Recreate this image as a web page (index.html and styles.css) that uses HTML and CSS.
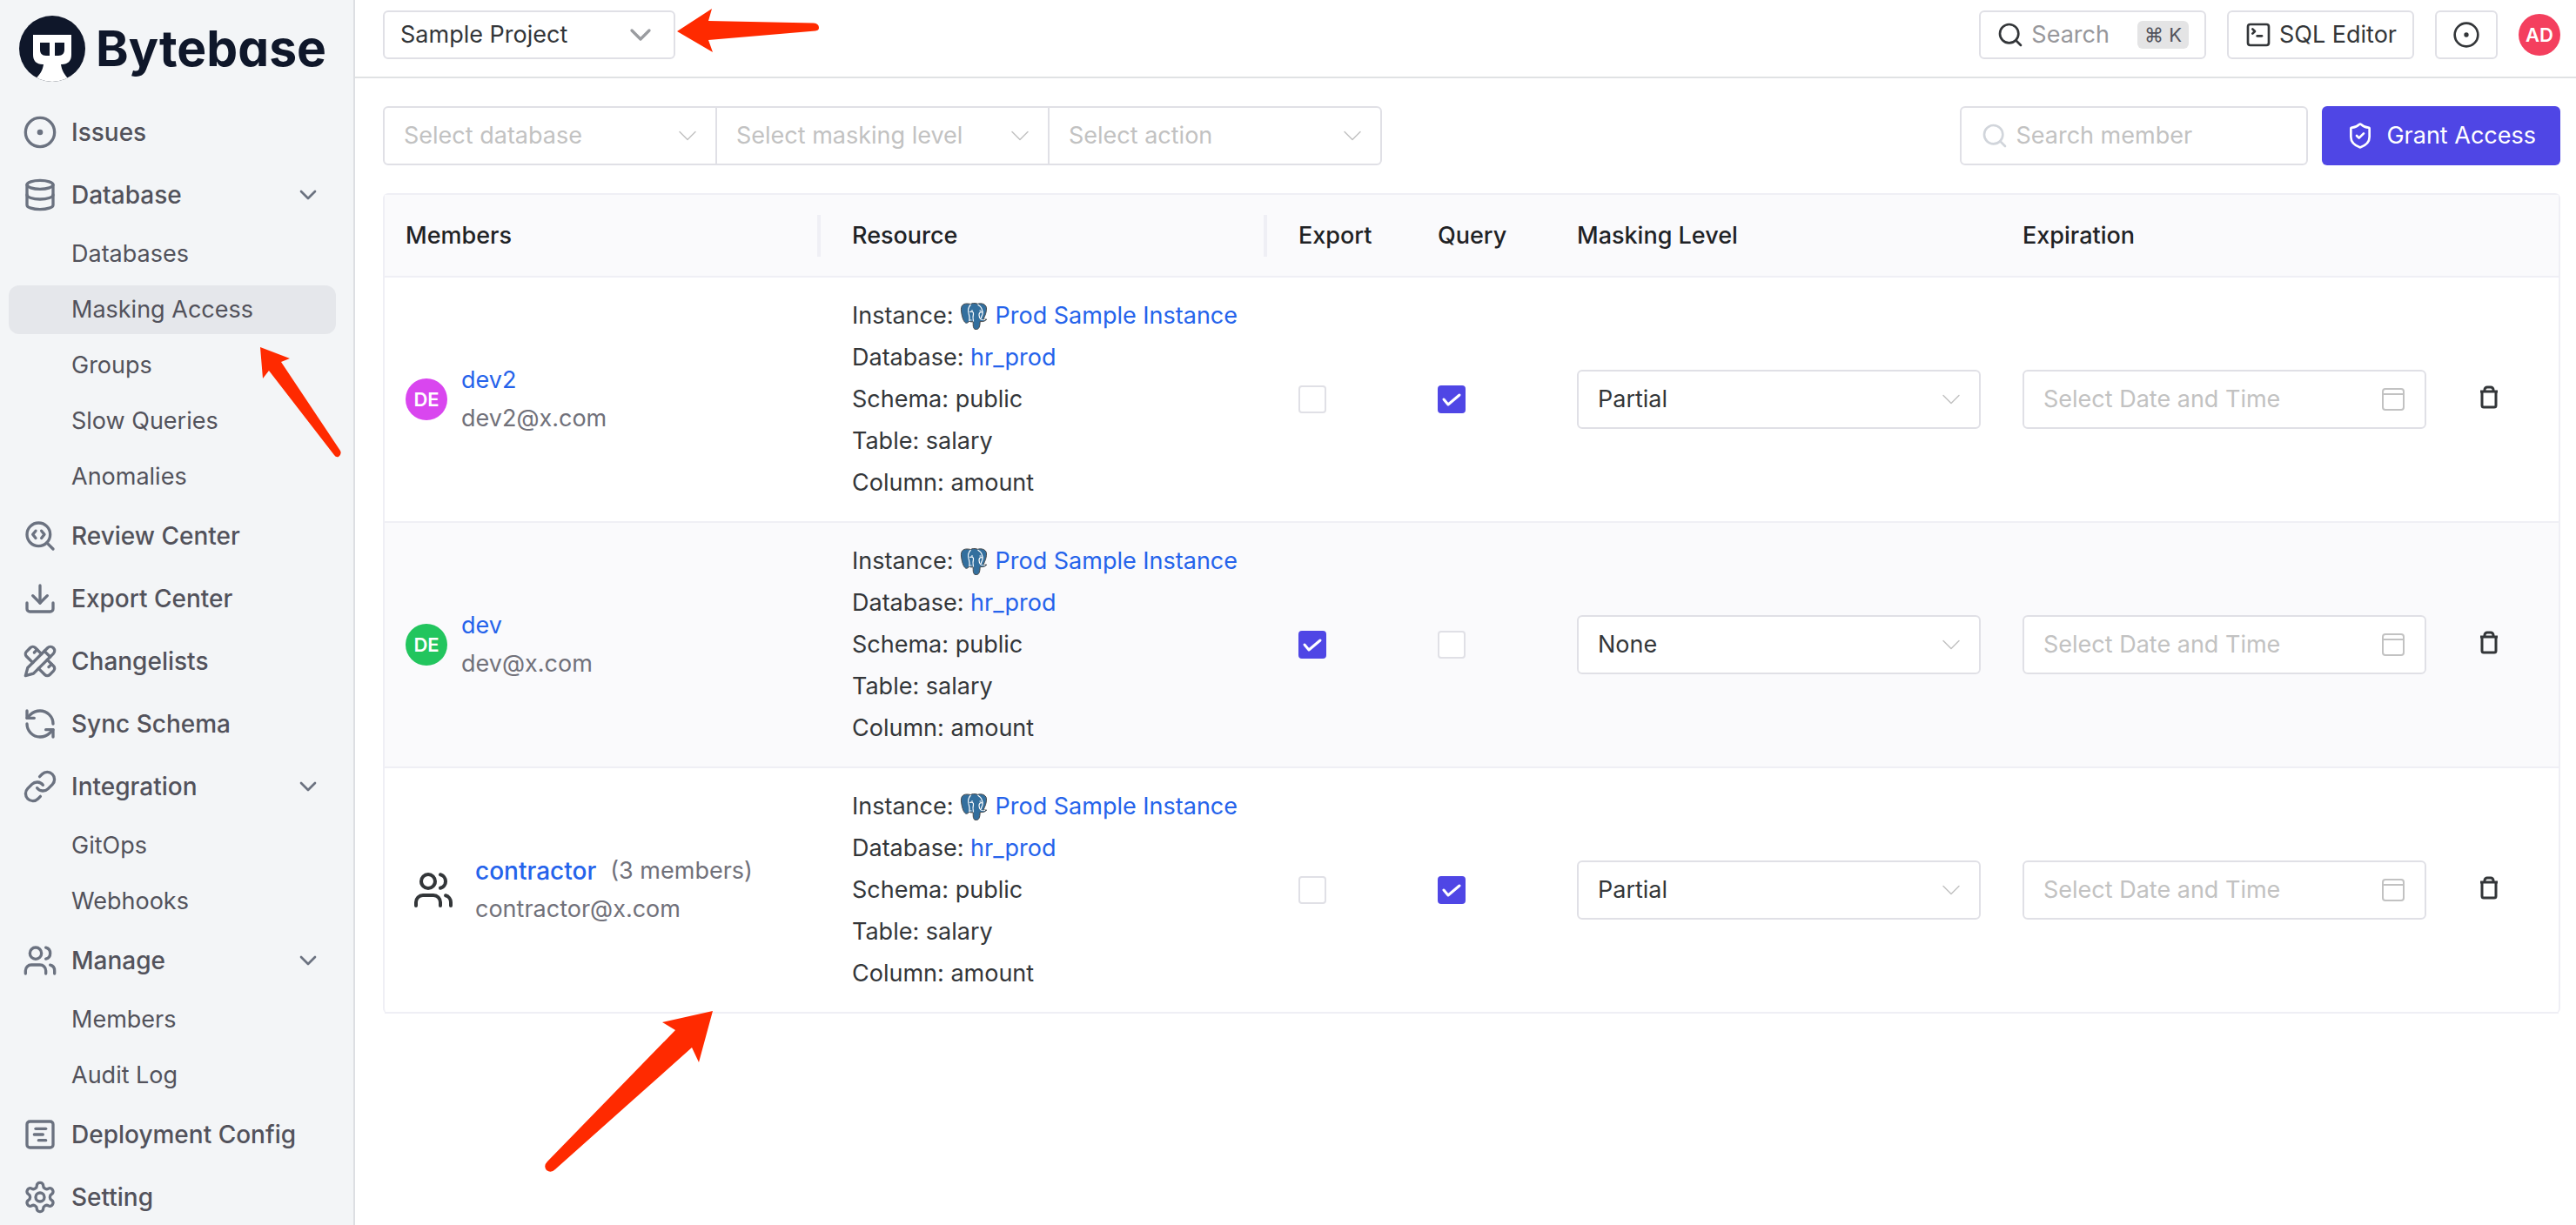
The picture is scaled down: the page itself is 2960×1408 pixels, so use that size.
FILE: index.html
```html
<!DOCTYPE html>
<html lang="en">
<head>
<meta charset="utf-8">
<title>Masking Access - Bytebase</title>
<link rel="stylesheet" href="styles.css">
</head>
<body>
<svg class="sprite" aria-hidden="true">
  <symbol id="i-dot" viewBox="0 0 24 24"><circle cx="12" cy="12" r="10"/><circle cx="12" cy="12" r="1"/></symbol>
  <symbol id="i-database" viewBox="0 0 24 24"><ellipse cx="12" cy="5" rx="9" ry="3"/><path d="M3 5v14a9 3 0 0 0 18 0V5"/><path d="M3 12a9 3 0 0 0 18 0"/></symbol>
  <symbol id="i-search-code" viewBox="0 0 24 24"><path d="m13 13.500 2-2.500-2-2.500"/><path d="m21 21-4.300-4.300"/><path d="M9 8.500 7 11l2 2.500"/><circle cx="11" cy="11" r="8"/></symbol>
  <symbol id="i-download" viewBox="0 0 24 24"><path d="M21 15v4a2 2 0 0 1-2 2H5a2 2 0 0 1-2-2v-4"/><path d="m7 10 5 5 5-5"/><path d="M12 15V3"/></symbol>
  <symbol id="i-pencil-ruler" viewBox="0 0 24 24"><path d="m15 5 4 4"/><path d="M13 7 8.700 2.700a2.410 2.410 0 0 0-3.400 0L2.700 5.300a2.410 2.410 0 0 0 0 3.400L7 13"/><path d="m8 6 2-2"/><path d="m2 22 5.500-1.500L21.170 6.830a2.820 2.820 0 0 0-4-4L3.500 16.500Z"/><path d="m18 16 2-2"/><path d="m17 11 4.300 4.300c.94.94.94 2.460 0 3.400l-2.600 2.600c-.94.94-2.460.94-3.400 0L11 17"/></symbol>
  <symbol id="i-refresh" viewBox="0 0 24 24"><path d="M21 12a9 9 0 0 0-9-9 9.750 9.750 0 0 0-6.740 2.740L3 8"/><path d="M3 3v5h5"/><path d="M3 12a9 9 0 0 0 9 9 9.750 9.750 0 0 0 6.740-2.740L21 16"/><path d="M16 16h5v5"/></symbol>
  <symbol id="i-link" viewBox="0 0 24 24"><path d="M10 13a5 5 0 0 0 7.540.54l3-3a5 5 0 0 0-7.070-7.070l-1.720 1.710"/><path d="M14 11a5 5 0 0 0-7.540-.54l-3 3a5 5 0 0 0 7.070 7.070l1.710-1.710"/></symbol>
  <symbol id="i-users" viewBox="0 0 24 24"><path d="M16 21v-2a4 4 0 0 0-4-4H6a4 4 0 0 0-4 4v2"/><circle cx="9" cy="7" r="4"/><path d="M22 21v-2a4 4 0 0 0-3-3.870"/><path d="M16 3.130a4 4 0 0 1 0 7.750"/></symbol>
  <symbol id="i-gantt" viewBox="0 0 24 24"><rect x="3" y="3" width="18" height="18" rx="2"/><path d="M9 8h7"/><path d="M8 12h6"/><path d="M11 16h5"/></symbol>
  <symbol id="i-settings" viewBox="0 0 24 24"><path d="M12.220 2h-.44a2 2 0 0 0-2 2v.18a2 2 0 0 1-1 1.730l-.43.25a2 2 0 0 1-2 0l-.15-.08a2 2 0 0 0-2.730.73l-.22.38a2 2 0 0 0 .73 2.730l.15.1a2 2 0 0 1 1 1.720v.51a2 2 0 0 1-1 1.740l-.15.09a2 2 0 0 0-.73 2.730l.22.38a2 2 0 0 0 2.730.73l.15-.08a2 2 0 0 1 2 0l.43.25a2 2 0 0 1 1 1.730V20a2 2 0 0 0 2 2h.44a2 2 0 0 0 2-2v-.18a2 2 0 0 1 1-1.730l.43-.25a2 2 0 0 1 2 0l.15.08a2 2 0 0 0 2.730-.73l.22-.39a2 2 0 0 0-.73-2.730l-.15-.08a2 2 0 0 1-1-1.740v-.5a2 2 0 0 1 1-1.740l.15-.09a2 2 0 0 0 .73-2.730l-.22-.38a2 2 0 0 0-2.730-.73l-.15.08a2 2 0 0 1-2 0l-.43-.25a2 2 0 0 1-1-1.730V4a2 2 0 0 0-2-2z"/><circle cx="12" cy="12" r="3"/></symbol>
  <symbol id="i-chevron" viewBox="0 0 24 24"><path d="m6 9 6 6 6-6"/></symbol>
  <symbol id="i-search" viewBox="0 0 24 24"><circle cx="11" cy="11" r="8"/><path d="m21 21-4.300-4.300"/></symbol>
  <symbol id="i-terminal" viewBox="0 0 24 24"><path d="m7 11 2-2-2-2"/><path d="M11 13h4"/><rect x="3" y="3" width="18" height="18" rx="2"/></symbol>
  <symbol id="i-shield" viewBox="0 0 24 24"><path d="M20 13c0 5-3.500 7.500-7.660 8.950a1 1 0 0 1-.67-.01C7.500 20.500 4 18 4 13V6a1 1 0 0 1 1-1c2 0 4.500-1.200 6.240-2.720a1.170 1.170 0 0 1 1.520 0C14.510 3.810 17 5 19 5a1 1 0 0 1 1 1z"/><path d="m9 12 2 2 4-4"/></symbol>
  <symbol id="i-calendar" viewBox="0 0 28 28"><rect x="2" y="2" width="24" height="24" rx="3"/><path d="M2 8h24"/></symbol>
  <symbol id="i-trash" viewBox="0 0 32 32"><path d="M6 7h20M8 7v16a2 2 0 0 0 2 2h12a2 2 0 0 0 2-2V7M11 6V5a3 3 0 0 1 3-3h4a3 3 0 0 1 3 3v1"/></symbol>
  <symbol id="i-postgres" viewBox="0 0 32 32">
    <path d="M8 2C3 2 1 5 1.500 10c.5 5 2 12 5 14 1.500 1 3-.5 4.500-2 1 1 2.500 1.200 4 .5.500 4-.5 8.500 3 9 4 .5 5-3 5.200-9 3 .5 6.500-.5 7.500-2.500-1 0-2.500.3-3.700-.3C29 16 31 10.500 30.500 6.500 29.500 2.500 25 1 20.500 2.300 17 1 14 1.500 12.500 2.500 11 2.200 9.500 2 8 2z" fill="#336f9e" stroke="#4a4a4a" stroke-width="1"/>
    <path d="M12.500 3C9.500 6 9 11 10.500 15c.8 2.500.5 4.500.3 6.500M20.500 3c4 2.500 6 7 5.500 11-.3 2-2 3-1.500 5M15.500 22.500c-.5-3-1-5 0-8.500.5-2.500-1.500-3.500-4.500-2.500M24 20c-1-1-2-2.500-2-5s1.500-4 3.500-3" fill="none" stroke="#fff" stroke-width="1.200"/>
    <path d="M13.500 21c-1.500-.3-2.500.2-3.500 1.200M24 20c1.500.8 3.500.9 5 .3" fill="none" stroke="#fff" stroke-width="1"/>
    <path d="M13 10h2M22.500 10h2" stroke="#fff" stroke-width="1"/>
  </symbol>
</svg>

<div class="app">
  <aside class="sidebar">
    <a class="brand" href="#">
      <svg class="brand-mark" viewBox="0 0 76 76" aria-hidden="true">
        <defs><clipPath id="brand-clip"><circle cx="38" cy="38" r="38"/></clipPath></defs>
        <circle cx="38" cy="38" r="38" fill="#0f172a"/>
        <path clip-path="url(#brand-clip)" fill="#fff" d="M16 22h44v23c0 7-4 11-11 11h-1c1 7 4 12 10 18v4H17v-4c7-6 10-11 11-18h-1c-7 0-11-4-11-11z"/>
        <path fill="#0f172a" d="M24 31h11v15h-4c-5 0-7-3-7-7zM41 31h11v8c0 4-2 7-7 7h-4z"/>
      </svg>
      <span class="brand-name">Bytebase</span>
    </a>
    <nav class="nav">
      <a class="nav-item" href="#"><svg class="icon nav-icon"><use href="#i-dot"/></svg>Issues</a>
      <a class="nav-item" href="#"><svg class="icon nav-icon"><use href="#i-database"/></svg>Database<svg class="icon nav-chevron"><use href="#i-chevron"/></svg></a>
      <a class="nav-sub" href="#">Databases</a>
      <a class="nav-sub is-active" href="#">Masking Access</a>
      <a class="nav-sub" href="#">Groups</a>
      <a class="nav-sub" href="#">Slow Queries</a>
      <a class="nav-sub" href="#">Anomalies</a>
      <a class="nav-item" href="#"><svg class="icon nav-icon"><use href="#i-search-code"/></svg>Review Center</a>
      <a class="nav-item" href="#"><svg class="icon nav-icon"><use href="#i-download"/></svg>Export Center</a>
      <a class="nav-item" href="#"><svg class="icon nav-icon"><use href="#i-pencil-ruler"/></svg>Changelists</a>
      <a class="nav-item" href="#"><svg class="icon nav-icon"><use href="#i-refresh"/></svg>Sync Schema</a>
      <a class="nav-item" href="#"><svg class="icon nav-icon"><use href="#i-link"/></svg>Integration<svg class="icon nav-chevron"><use href="#i-chevron"/></svg></a>
      <a class="nav-sub" href="#">GitOps</a>
      <a class="nav-sub" href="#">Webhooks</a>
      <a class="nav-item" href="#"><svg class="icon nav-icon"><use href="#i-users"/></svg>Manage<svg class="icon nav-chevron"><use href="#i-chevron"/></svg></a>
      <a class="nav-sub" href="#">Members</a>
      <a class="nav-sub" href="#">Audit Log</a>
      <a class="nav-item" href="#"><svg class="icon nav-icon"><use href="#i-gantt"/></svg>Deployment Config</a>
      <a class="nav-item" href="#"><svg class="icon nav-icon"><use href="#i-settings"/></svg>Setting</a>
    </nav>
  </aside>

  <div class="page">
    <header class="topbar">
      <button class="btn project" type="button">Sample Project<svg class="icon project-chevron"><use href="#i-chevron"/></svg></button>
      <div class="topbar-actions">
        <button class="btn search-btn" type="button"><svg class="icon icon-md"><use href="#i-search"/></svg><span class="muted">Search</span><kbd>⌘ K</kbd></button>
        <button class="btn" type="button"><svg class="icon icon-md"><use href="#i-terminal"/></svg>SQL Editor</button>
        <button class="btn btn-square" type="button" aria-label="My issues"><svg class="icon icon-md"><use href="#i-dot"/></svg></button>
        <span class="avatar avatar-rose">AD</span>
      </div>
    </header>

    <main class="content">
      <div class="toolbar">
        <div class="filters">
          <div class="select is-placeholder"><select aria-label="Select database"><option>Select database</option></select><svg class="icon"><use href="#i-chevron"/></svg></div>
          <div class="select is-placeholder"><select aria-label="Select masking level"><option>Select masking level</option></select><svg class="icon"><use href="#i-chevron"/></svg></div>
          <div class="select is-placeholder"><select aria-label="Select action"><option>Select action</option></select><svg class="icon"><use href="#i-chevron"/></svg></div>
        </div>
        <div class="toolbar-actions">
          <label class="field member-search"><svg class="icon icon-md"><use href="#i-search"/></svg><input type="text" placeholder="Search member" aria-label="Search member"></label>
          <button class="btn-primary" type="button"><svg class="icon icon-md"><use href="#i-shield"/></svg>Grant Access</button>
        </div>
      </div>

      <div class="table-wrap">
        <table class="access">
          <colgroup><col class="c-text"><col class="c-text"><col class="c-check"><col class="c-check"><col class="c-control"><col class="c-control"><col></colgroup>
          <thead>
            <tr><th scope="col"><div class="th-split">Members</div></th><th scope="col"><div class="th-split">Resource</div></th><th scope="col">Export</th><th scope="col">Query</th><th scope="col">Masking Level</th><th scope="col">Expiration</th><td></td></tr>
          </thead>
          <tbody>
            <tr>
              <td><div class="member"><span class="avatar avatar-fuchsia">DE</span><div><div><a href="#">dev2</a></div><div class="email">dev2@x.com</div></div></div></td>
              <td><div class="resource">
                <div class="instance">Instance: <svg class="pg"><use href="#i-postgres"/></svg><a href="#">Prod Sample Instance</a></div>
                <div>Database: <a href="#">hr_prod</a></div><div>Schema: public</div><div>Table: salary</div><div>Column: amount</div></div></td>
              <td><input class="check" type="checkbox" aria-label="Export for dev2"></td>
              <td><input class="check" type="checkbox" aria-label="Query for dev2" checked></td>
              <td><div class="select"><select aria-label="Masking level for dev2"><option>Partial</option><option>None</option></select><svg class="icon"><use href="#i-chevron"/></svg></div></td>
              <td><label class="field date"><input type="text" placeholder="Select Date and Time" aria-label="Expiration for dev2"><svg class="icon"><use href="#i-calendar"/></svg></label></td>
              <td><button class="trash" type="button" aria-label="Revoke dev2"><svg class="icon icon-md"><use href="#i-trash"/></svg></button></td>
            </tr>
            <tr>
              <td><div class="member"><span class="avatar avatar-green">DE</span><div><div><a href="#">dev</a></div><div class="email">dev@x.com</div></div></div></td>
              <td><div class="resource">
                <div class="instance">Instance: <svg class="pg"><use href="#i-postgres"/></svg><a href="#">Prod Sample Instance</a></div>
                <div>Database: <a href="#">hr_prod</a></div><div>Schema: public</div><div>Table: salary</div><div>Column: amount</div></div></td>
              <td><input class="check" type="checkbox" aria-label="Export for dev" checked></td>
              <td><input class="check" type="checkbox" aria-label="Query for dev"></td>
              <td><div class="select"><select aria-label="Masking level for dev"><option>None</option><option>Partial</option></select><svg class="icon"><use href="#i-chevron"/></svg></div></td>
              <td><label class="field date"><input type="text" placeholder="Select Date and Time" aria-label="Expiration for dev"><svg class="icon"><use href="#i-calendar"/></svg></label></td>
              <td><button class="trash" type="button" aria-label="Revoke dev"><svg class="icon icon-md"><use href="#i-trash"/></svg></button></td>
            </tr>
            <tr>
              <td><div class="member is-group"><svg class="icon group-icon"><use href="#i-users"/></svg><div><div class="group-name"><a href="#">contractor</a><span class="email">(3 members)</span></div><div class="email">contractor@x.com</div></div></div></td>
              <td><div class="resource">
                <div class="instance">Instance: <svg class="pg"><use href="#i-postgres"/></svg><a href="#">Prod Sample Instance</a></div>
                <div>Database: <a href="#">hr_prod</a></div><div>Schema: public</div><div>Table: salary</div><div>Column: amount</div></div></td>
              <td><input class="check" type="checkbox" aria-label="Export for contractor"></td>
              <td><input class="check" type="checkbox" aria-label="Query for contractor" checked></td>
              <td><div class="select"><select aria-label="Masking level for contractor"><option>Partial</option><option>None</option></select><svg class="icon"><use href="#i-chevron"/></svg></div></td>
              <td><label class="field date"><input type="text" placeholder="Select Date and Time" aria-label="Expiration for contractor"><svg class="icon"><use href="#i-calendar"/></svg></label></td>
              <td><button class="trash" type="button" aria-label="Revoke contractor"><svg class="icon icon-md"><use href="#i-trash"/></svg></button></td>
            </tr>
          </tbody>
        </table>
      </div>
    </main>
  </div>
</div>

<svg class="annotations" width="960" height="1360" viewBox="0 0 960 1360" aria-hidden="true">
  <path d="M778 36 818 10 814 24 935 26.500Q941 27 941 32 941 35 937 35.500L814 46 819 60Z"/>
  <path d="M299 399 333 412 323 416 391 518Q393 522 389 525 386 526 384 523L309 426 302 435Z"/>
  <path d="M819 1162 803 1221 795 1204 638 1344Q633 1349 628 1345 624 1340 629 1335L776 1184 761 1175Z"/>
</svg>
</body>
</html>
```
FILE: styles.css
```css
* { box-sizing: border-box; }

body {
  margin: 0;
  background: #fff;
  color: #333639;
  font: 400 27px/44px Inter, "Liberation Sans", sans-serif;
}

a { color: #2563eb; text-decoration: none; }
button, input, select { font: inherit; color: inherit; }

.sprite { display: none; }

.icon {
  flex: none;
  fill: none;
  stroke: currentColor;
  stroke-width: 2;
  stroke-linecap: round;
  stroke-linejoin: round;
}
.icon-md { width: 32px; height: 32px; }

.app { display: flex; min-height: 100vh; }

/* Sidebar */
.sidebar {
  flex: none;
  width: 408px;
  background: #f3f5f7;
  border-right: 2px solid #dddfe3;
}
.brand {
  display: flex;
  align-items: center;
  gap: 12px;
  height: 112px;
  padding-left: 22px;
  color: #0f172a;
}
.brand-mark { width: 76px; height: 76px; flex: none; }
.brand-name {
  font-size: 57px;
  font-weight: 700;
  line-height: 76px;
  font-feature-settings: "cv11";
}
.nav {
  display: flex;
  flex-direction: column;
  gap: 8px;
  padding: 8px 20px 0 10px;
}
.nav-item, .nav-sub {
  display: flex;
  align-items: center;
  border-radius: 12px;
  color: #52525b;
}
.nav-item {
  height: 64px;
  gap: 16px;
  padding: 0 16px;
  font-size: 28px;
  font-weight: 500;
}
.nav-sub { height: 56px; padding-left: 72px; }
.nav-sub.is-active { background: #e5e7eb; }
.nav-icon { width: 40px; height: 40px; color: #6b7280; }
.nav-chevron { width: 32px; height: 32px; margin-left: auto; color: #6b7280; }

/* Top bar */
.page { flex: 1; min-width: 0; }
.topbar {
  display: flex;
  justify-content: space-between;
  align-items: center;
  height: 90px;
  padding: 0 18px 8px 32px;
  border-bottom: 2px solid #e0e2e4;
}
.topbar-actions { display: flex; align-items: center; gap: 24px; }
.btn {
  display: flex;
  align-items: center;
  gap: 8px;
  height: 56px;
  padding: 0 18px;
  background: #fff;
  border: 2px solid #e0e0e6;
  border-radius: 6px;
}
.project { justify-content: space-between; width: 336px; }
.project-chevron { width: 40px; height: 40px; color: #9a9ca0; }
.muted { color: #97979b; }
kbd {
  margin-left: 24px;
  padding: 0 8px;
  border-radius: 6px;
  background: #e4e4e5;
  color: #52525b;
  font: 400 22px/32px Inter, sans-serif;
}
.btn-square { width: 72px; justify-content: center; padding: 0; }
.avatar {
  display: flex;
  align-items: center;
  justify-content: center;
  flex: none;
  width: 48px;
  height: 48px;
  border-radius: 50%;
  color: #fff;
  font-size: 22px;
  font-weight: 600;
  line-height: 24px;
}
.avatar-rose { background: #f43f5e; }
.avatar-fuchsia { background: #d946ef; }
.avatar-green { background: #22c55e; }

/* Filters and actions */
.content { padding: 32px 18px 32px 32px; }
.toolbar { display: flex; justify-content: space-between; margin-bottom: 32px; }
.filters { display: flex; }
.filters .select { width: 384px; }
.filters .select + .select { margin-left: -2px; }
.filters .select select { border-radius: 0; }
.filters .select:first-child select { border-radius: 6px 0 0 6px; }
.filters .select:last-child select { border-radius: 0 6px 6px 0; }

.select { display: grid; align-items: center; }
.select > * { grid-area: 1 / 1; }
.select select {
  appearance: none;
  width: 100%;
  height: 68px;
  padding: 0 64px 0 22px;
  background: #fff;
  border: 2px solid #e0e0e6;
  border-radius: 6px;
}
.select .icon {
  justify-self: end;
  width: 36px;
  height: 36px;
  margin-right: 16px;
  color: #c2c2c2;
  stroke-width: 1;
  pointer-events: none;
}
.is-placeholder select { color: #c2c2c2; }

.toolbar-actions { display: flex; gap: 16px; }
.field {
  display: flex;
  align-items: center;
  gap: 8px;
  height: 68px;
  padding: 0 22px;
  background: #fff;
  border: 2px solid #e0e0e6;
  border-radius: 6px;
}
.field input {
  flex: 1;
  min-width: 0;
  padding: 0;
  background: none;
  border: 0;
  outline: 0;
}
.field input::placeholder { color: #c2c2c2; opacity: 1; }
.member-search { width: 400px; }
.member-search .icon { color: #d1d5db; }
.btn-primary {
  display: flex;
  align-items: center;
  gap: 14px;
  height: 68px;
  padding: 0 28px;
  background: #4f46e5;
  border: 0;
  border-radius: 6px;
  color: #fff;
}

/* Access table */
.table-wrap { border: 2px solid #efeff5; border-bottom: 0; border-radius: 6px; }
.access { width: 100%; table-layout: fixed; border-collapse: separate; border-spacing: 0; }
.c-text { width: 513px; }
.c-check { width: 160px; }
.c-control { width: 512px; }
.access th, .access td {
  padding: 20px 24px;
  border-bottom: 2px solid #efeff5;
  text-align: left;
  vertical-align: middle;
}
.access thead > tr > * {
  height: 95px;
  padding-block: 0;
  background: #fafafc;
  color: #1f2225;
  font-weight: 500;
}
.access tbody tr:nth-child(even) { background: #fafafc; }
.th-split {
  display: flex;
  align-items: center;
  justify-content: space-between;
  margin-right: -12px;
}
.th-split::after { content: ""; width: 4px; height: 48px; background: #efeff5; }

.member { display: flex; align-items: center; gap: 16px; }
.member.is-group { gap: 24px; padding-left: 8px; }
.group-icon { width: 48px; height: 48px; }
.group-name { display: flex; gap: 16px; }
.group-name a { font-size: 28px; font-weight: 500; }
.email { color: #71717a; }
.resource { line-height: 48px; }
.instance { display: flex; align-items: center; gap: 8px; }
.pg { width: 32px; height: 32px; flex: none; }

.check {
  appearance: none;
  display: block;
  width: 32px;
  height: 32px;
  margin: 0;
  background: #fff;
  border: 2px solid #e0e0e6;
  border-radius: 4px;
}
.check:checked {
  border-color: #4f46e5;
  background: #4f46e5 url("data:image/svg+xml,%3Csvg xmlns='http://www.w3.org/2000/svg' viewBox='0 0 28 28'%3E%3Cpath d='M5 14l5 6 13-11' fill='none' stroke='white' stroke-width='3' stroke-linecap='round' stroke-linejoin='round'/%3E%3C/svg%3E") center / 28px 28px;
}
.date .icon { width: 28px; height: 28px; color: #c2c2c2; }
.trash {
  display: flex;
  padding: 0 8px;
  background: none;
  border: 0;
}
.trash .icon { stroke-width: 3; stroke-linecap: butt; }

/* Callout arrows drawn over the page */
.annotations {
  position: absolute;
  top: 0;
  left: 0;
  fill: #ff2a00;
  pointer-events: none;
}
```
